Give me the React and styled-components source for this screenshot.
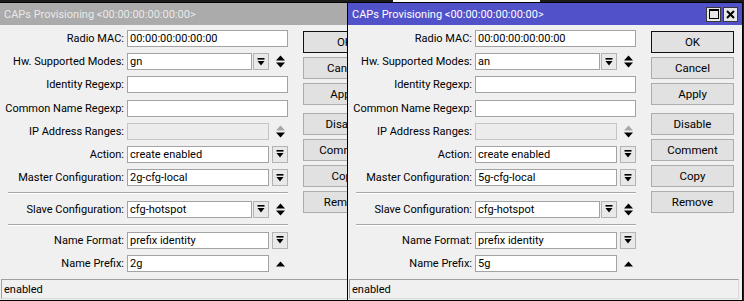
import React from "react";
import styled, { createGlobalStyle, css } from "styled-components";

const Global = createGlobalStyle`
  html, body { margin: 0; padding: 0; overflow: hidden; background: #1b1b1b; }
  * { box-sizing: border-box; }
`;

const Desktop = styled.div`
  position: relative;
  width: 744px;
  height: 301px;
  overflow: hidden;
  background: linear-gradient(to right, #1b1b1b 393px, #ffffff 393px, #ffffff 540px, #1b1b1b 540px) top / 100% 3px no-repeat, #1b1b1b;
  font-family: Roboto, "Liberation Sans", Arial, sans-serif;
  font-size: 11px;
  color: #000;
`;

const Win = styled.div`
  position: absolute;
  top: 2px;
  left: ${(p) => p.$x}px;
  width: 396px;
  height: 299px;
  border: 1px solid #000;
  background: #f0f0f0;
  display: flex;
  flex-direction: column;
`;

const TitleBar = styled.div`
  height: 22px;
  flex: none;
  display: flex;
  align-items: center;
  padding: 0 4px 0 4px;
  background: ${(p) => (p.$active ? "#5151c9" : "#ababab")};
  color: ${(p) => (p.$active ? "#ffffff" : "#e9e9e9")};
`;

const Title = styled.div`
  flex: 1;
  white-space: nowrap;
  font-size: 11px;
`;

const TitleButtons = styled.div`
  display: flex;
  gap: 2px;
`;

const TitleBtn = styled.div`
  width: 15px;
  height: 15px;
  border: 1px solid #3a3a3a;
  background: #e8e8e8;
  display: flex;
  align-items: center;
  justify-content: center;
`;

const Body = styled.div`
  display: flex;
  padding-top: 5px;
`;

const Form = styled.div`
  width: 288px;
  display: flex;
  flex-direction: column;
  gap: 6.2px;
`;

const Row = styled.div`
  display: flex;
  align-items: center;
  height: 17px;
`;

const Label = styled.div`
  width: 124px;
  text-align: right;
  white-space: nowrap;
`;

const Field = styled.div`
  width: 161px;
  margin-left: 3px;
  display: flex;
  align-items: center;
  height: 17px;
`;

const TextBox = styled.div`
  flex: 1;
  height: 17px;
  border: 1px solid ${(p) => (p.$disabled ? "#c4c4c4" : "#a3a3a3")};
  background: ${(p) => (p.$disabled ? "#ececec" : "#ffffff")};
  padding: 0 2px;
  line-height: 15px;
  white-space: nowrap;
  overflow: hidden;
`;

const DropBtn = styled.div`
  width: 16px;
  height: 17px;
  margin-left: ${(p) => p.$ml}px;
  border: 1px solid #b3b3b3;
  background: #e9e9e9;
  display: flex;
  align-items: center;
  justify-content: center;
`;

const Spin = styled.div`
  width: 16px;
  height: 17px;
  margin-left: 3px;
  display: flex;
  align-items: center;
  justify-content: center;
`;

const Separator = styled.div`
  margin-left: 8px;
  width: 280px;
  height: 2px;
  border-top: 1px solid #a7a7a7;
  border-bottom: 1px solid #ffffff;
`;

const ButtonColumn = styled.div`
  margin-left: 15px;
  width: 83px;
  padding-top: 1px;
  display: flex;
  flex-direction: column;
  gap: 4px;
`;

const Button = styled.div`
  height: 22px;
  border: 1px solid ${(p) => (p.$default ? "#111" : "#adadad")};
  background: #e1e1e1;
  display: flex;
  align-items: center;
  justify-content: center;
  font-size: 11.5px;
  ${(p) =>
    p.$spaced &&
    css`
      margin-top: 4px;
    `}
`;

const StatusBar = styled.div`
  margin: auto 3px 1px 1px;
  height: 20px;
  border: 1px solid #d9d9d9;
  border-top-color: #a0a0a0;
  border-left-color: #a0a0a0;
  padding: 0 2px;
  display: flex;
  align-items: center;
`;

const DropIcon = () => (
  <svg width="8" height="8" viewBox="0 0 8 8">
    <rect x="0.5" y="0" width="7" height="1.6" fill="#000" />
    <polygon points="0.5,3 7.5,3 4,7.5" fill="#000" />
  </svg>
);

const SpinIcon = ({ upColor = "#000", down = true }) => (
  <svg width="9" height="13" viewBox="0 0 9 13">
    <polygon points="0,5.5 9,5.5 4.5,0.5" fill={upColor} />
    {down && <polygon points="0,7.5 9,7.5 4.5,12.5" fill="#000" />}
  </svg>
);

const MaxIcon = () => (
  <svg width="10" height="10" viewBox="0 0 10 10">
    <rect x="0.5" y="0.5" width="9" height="9" fill="none" stroke="#000" strokeWidth="1" />
    <rect x="0.5" y="0.5" width="9" height="1.5" fill="#000" />
  </svg>
);

const CloseIcon = () => (
  <svg width="9" height="9" viewBox="0 0 9 9">
    <path d="M1 1 L8 8 M8 1 L1 8" stroke="#000" strokeWidth="2" />
  </svg>
);

const buildRows = (w) => [
  { label: "Radio MAC:", value: "00:00:00:00:00:00" },
  { label: "Hw. Supported Modes:", value: w.modes, drop: true, spin: "both" },
  { label: "Identity Regexp:", value: "" },
  { label: "Common Name Regexp:", value: "" },
  { label: "IP Address Ranges:", value: "", disabled: true, spin: "dim" },
  { label: "Action:", value: "create enabled", drop: true },
  { label: "Master Configuration:", value: w.master, drop: true },
  "sep",
  { label: "Slave Configuration:", value: "cfg-hotspot", drop: true, spin: "both" },
  "sep",
  { label: "Name Format:", value: "prefix identity", drop: true },
  { label: "Name Prefix:", value: w.prefix, spin: "up" },
];

const buttons = ["OK", "Cancel", "Apply", "Disable", "Comment", "Copy", "Remove"];

const FieldRow = ({ r }) => (
  <Row>
    <Label>{r.label}</Label>
    <Field>
      <TextBox $disabled={r.disabled}>{r.value}</TextBox>
      {r.drop && (
        <DropBtn $ml={r.spin ? 1 : 3}>
          <DropIcon />
        </DropBtn>
      )}
      {r.spin && (
        <Spin>
          {r.spin === "both" && <SpinIcon />}
          {r.spin === "dim" && <SpinIcon upColor="#a8a8a8" />}
          {r.spin === "up" && (
            <svg width="9" height="6" viewBox="0 0 9 6">
              <polygon points="0,5.5 9,5.5 4.5,0.5" fill="#000" />
            </svg>
          )}
        </Spin>
      )}
    </Field>
  </Row>
);

const Window = ({ x, active, data }) => (
  <Win $x={x}>
    <TitleBar $active={active}>
      <Title>CAPs Provisioning &lt;00:00:00:00:00:00&gt;</Title>
      <TitleButtons>
        <TitleBtn>
          <MaxIcon />
        </TitleBtn>
        <TitleBtn>
          <CloseIcon />
        </TitleBtn>
      </TitleButtons>
    </TitleBar>
    <Body>
      <Form>
        {buildRows(data).map((r, i) =>
          r === "sep" ? <Separator key={i} /> : <FieldRow key={i} r={r} />
        )}
      </Form>
      <ButtonColumn>
        {buttons.map((b) => (
          <Button key={b} $default={b === "OK"} $spaced={b === "Disable"}>
            {b}
          </Button>
        ))}
      </ButtonColumn>
    </Body>
    <StatusBar>enabled</StatusBar>
  </Win>
);

export default function App() {
  return (
    <>
      <Global />
      <Desktop>
        <Window x={-1} data={{ modes: "gn", master: "2g-cfg-local", prefix: "2g" }} />
        <Window x={347} active data={{ modes: "an", master: "5g-cfg-local", prefix: "5g" }} />
      </Desktop>
    </>
  );
}
